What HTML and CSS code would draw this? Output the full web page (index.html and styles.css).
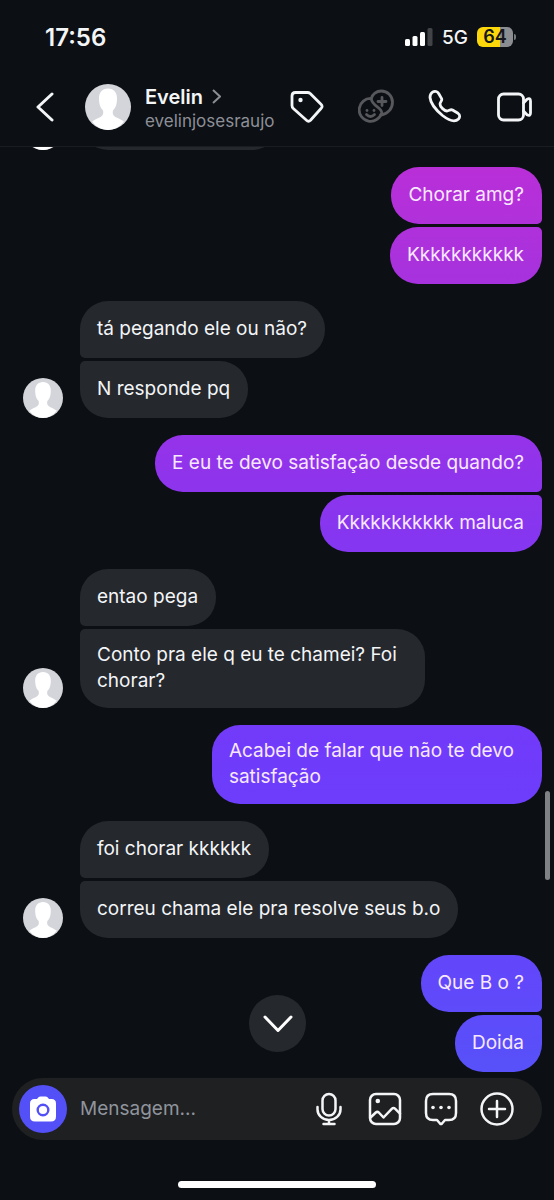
FILE: index.html
```html
<!DOCTYPE html>
<html lang="pt-BR">
<head>
<meta charset="utf-8">
<meta name="viewport" content="width=device-width, initial-scale=1">
<title>Evelin</title>
<link rel="stylesheet" href="styles.css">
</head>
<body>
<svg class="defs" aria-hidden="true">
  <symbol id="person" viewBox="0 0 46 46">
    <circle cx="23" cy="23" r="23" fill="#d3d5da"/>
    <path fill="#fff" d="M23 4.500c-6 0-9.300 4.500-9 10.500.1 4.500.8 8.500 4 11.500.8 3.500-.2 5.500-3.500 7-3 1.300-5.700 2.500-7.300 4.300C11.200 42.800 16.800 46 23 46s11.800-3.200 15.800-8.200c-1.600-1.800-4.300-3-7.300-4.300-3.300-1.500-4.300-3.500-3.500-7 3.200-3 3.900-7 4-11.500.3-6-3-10.500-9-10.500z"/>
  </symbol>
</svg>
<div class="screen">
  <div class="status">
    <time class="clock">17:56</time>
    <div class="status-right">
      <svg class="signal" viewBox="0 0 28 18" aria-hidden="true">
        <rect x="0" y="11" width="5" height="7" rx="1.500"/>
        <rect x="7.500" y="8" width="5" height="10" rx="1.500"/>
        <rect x="15" y="4" width="5" height="14" rx="1.500"/>
        <rect x="22.500" y="0" width="5" height="18" rx="1.500" opacity=".22"/>
      </svg>
      <span class="network">5G</span>
      <span class="battery">64</span>
    </div>
  </div>

  <header class="header">
    <button class="icon-button back" aria-label="Voltar">
      <svg viewBox="0 0 18 30"><path d="M16 2 2 15l14 13"/></svg>
    </button>
    <svg class="avatar avatar-large" role="img" aria-label="Foto de Evelin"><use href="#person"/></svg>
    <a class="contact" href="#">
      <span class="name">Evelin <svg class="chevron" viewBox="0 0 9 15" aria-hidden="true"><path d="m1 1 7 6.500L1 14"/></svg></span>
      <span class="handle">evelinjosesraujo</span>
    </a>
    <div class="actions">
      <button class="icon-button" aria-label="Etiqueta">
        <svg viewBox="0 0 36 36"><path d="M6.500 3.500h12q1.500 0 2.700 1L32 15.300q2.200 2.200 0 4.200L21.500 31.300q-2 2-4 0L4.300 19.500q-1.300-1.200-1.300-3V7q0-3.500 3.500-3.500z"/><circle class="solid" cx="11.500" cy="11" r="2.200"/></svg>
      </button>
      <button class="icon-button dim" aria-label="Figurinhas">
        <svg viewBox="0 0 36 36"><path d="M13.300 9.500C14.300 5 18.500 2 23.300 2c6.200 0 11.200 5 11.200 11.200 0 6.500-4.700 11.800-11.500 12.800"/><path d="M13.300 9.500A11.400 11.400 0 1 0 23.600 23.800C24.500 18.500 13.500 17 13.300 9.500z"/><path d="M24 8.500v8M20 12.500h8M8.500 25.500q4 4 8 0"/><circle class="solid" cx="9" cy="21.500" r="1.400"/><circle class="solid" cx="16" cy="21.500" r="1.400"/></svg>
      </button>
      <button class="icon-button" aria-label="Ligar">
        <svg viewBox="0 0 36 36"><path d="M5.500 3.200C8 1.500 10.500 2.500 11.800 4.800l2.800 4.800C15.600 11.500 13 13 13 15c0 3 4.500 7 7 7 2 0 3.500-2 5.500-1l5.500 3.300c2.500 1.700 1.800 4.200.5 5.700-3.500 3.500-9.500 1.500-16-3.500C9 21 3.500 14 3 8.500 3 6 3.500 4.500 5.500 3.200z"/></svg>
      </button>
      <button class="icon-button" aria-label="Chamada de vídeo">
        <svg viewBox="0 0 36 36"><rect x="2.500" y="5" width="25" height="26" rx="5"/><path d="m27.500 14 3.500-3.700q3.500-1.800 3.500 1.700v12q0 3.500-3.500 1.700L27.500 22"/></svg>
      </button>
    </div>
  </header>

  <main class="chat">
    <section class="group received">
      <svg class="avatar"><use href="#person"/></svg>
      <div class="stack"><div class="bubble cut"></div></div>
    </section>
    <section class="group sent">
      <div class="stack"><p class="bubble">Chorar amg?</p><p class="bubble">Kkkkkkkkkkk</p></div>
    </section>
    <section class="group received">
      <svg class="avatar"><use href="#person"/></svg>
      <div class="stack"><p class="bubble">tá pegando ele ou não?</p><p class="bubble">N responde pq</p></div>
    </section>
    <section class="group sent">
      <div class="stack"><p class="bubble">E eu te devo satisfação desde quando?</p><p class="bubble">Kkkkkkkkkkk maluca</p></div>
    </section>
    <section class="group received">
      <svg class="avatar"><use href="#person"/></svg>
      <div class="stack"><p class="bubble">entao pega</p><p class="bubble multiline">Conto pra ele q eu te chamei? Foi<br>chorar?</p></div>
    </section>
    <section class="group sent">
      <div class="stack"><p class="bubble multiline">Acabei de falar que não te devo<br>satisfação</p></div>
    </section>
    <section class="group received">
      <svg class="avatar"><use href="#person"/></svg>
      <div class="stack"><p class="bubble">foi chorar kkkkkk</p><p class="bubble">correu chama ele pra resolve seus b.o</p></div>
    </section>
    <section class="group sent">
      <div class="stack"><p class="bubble">Que B o ?</p><p class="bubble">Doida</p></div>
    </section>
    <span class="scrollbar"></span>
    <button class="jump" aria-label="Ir para o fim">
      <svg viewBox="0 0 30 18"><path d="m2 2 13 13.500L28 2"/></svg>
    </button>
  </main>

  <footer class="footer">
    <form class="composer">
      <button class="camera" type="button" aria-label="Câmera">
        <svg viewBox="0 0 28 26"><path fill="#fff" d="M8 3 9.500 1.200Q10.300.5 11.500.5h5q1.200 0 2 .7L20 3h2.500Q27 3 27 7.500v13q0 5-5 5H6q-5 0-5-5v-13Q1 3 5.500 3z"/><circle cx="14" cy="14" r="5.300" fill="none" stroke="#5450f8" stroke-width="2.400"/></svg>
      </button>
      <input class="field" type="text" aria-label="Mensagem" placeholder="Mensagem...">
      <button class="icon-button" type="button" aria-label="Gravar áudio">
        <svg viewBox="0 0 34 34"><rect x="10.500" y="2" width="13" height="21.500" rx="6.500"/><path d="M5.500 15v2.500a11.500 10.500 0 0 0 23 0V15M17 28v3.500M11.500 32h11"/></svg>
      </button>
      <button class="icon-button" type="button" aria-label="Enviar foto">
        <svg viewBox="0 0 34 34"><rect x="2" y="2" width="30" height="30" rx="6"/><path d="m2.500 25.500 5.300-5q1.500-1.300 3 0l4.700 5 8.500-8.800q1.500-1.500 3 0l5 5"/><circle class="solid" cx="9.800" cy="9" r="2.300"/></svg>
      </button>
      <button class="icon-button" type="button" aria-label="Respostas rápidas">
        <svg viewBox="0 0 34 34"><path d="M9 2h16q7 0 7 7v12q0 7-7 7h-4l-3 3.500q-1 1-2 0L13 28H9q-7 0-7-7V9q0-7 7-7z"/><circle class="solid" cx="9" cy="15.500" r="1.800"/><circle class="solid" cx="17" cy="15.500" r="1.800"/><circle class="solid" cx="25" cy="15.500" r="1.800"/></svg>
      </button>
      <button class="icon-button" type="button" aria-label="Mais opções">
        <svg viewBox="0 0 34 34"><circle cx="17" cy="17" r="15.500"/><path d="M17 9v16M9 17h16"/></svg>
      </button>
    </form>
    <div class="home-indicator"></div>
  </footer>
</div>
</body>
</html>
```
FILE: styles.css
```css
* { box-sizing: border-box; }

body {
  margin: 0;
  background: #0c0f14;
  color: #f3f5f7;
  font-family: Inter, "Liberation Sans", sans-serif;
}

button {
  padding: 0;
  border: 0;
  background: none;
  color: inherit;
  font: inherit;
}

svg { display: block; }
.defs { position: absolute; width: 0; height: 0; }

.screen {
  display: flex;
  flex-direction: column;
  height: 100vh;
}

/* Status bar */
.status {
  display: flex;
  align-items: center;
  justify-content: space-between;
  height: 74px;
  padding: 0 41px 0 45px;
}
.clock { font-size: 24px; font-weight: 600; }
.status-right { display: flex; align-items: center; gap: 9px; }
.signal { width: 28px; height: 18px; fill: #fff; }
.network { font-size: 19px; font-weight: 500; }
.battery {
  position: relative;
  width: 36px;
  height: 20px;
  border-radius: 6px;
  background: linear-gradient(90deg, #fcd70a 64%, #8c8d91 64%);
  color: #15161a;
  font-size: 18px;
  font-weight: 600;
  line-height: 20px;
  text-align: center;
}
.battery::after {
  content: "";
  position: absolute;
  top: 7px;
  right: -3px;
  width: 2px;
  height: 6px;
  border-radius: 0 2px 2px 0;
  background: #77787c;
}

/* Header */
.header {
  display: flex;
  align-items: center;
  height: 73px;
  padding: 0 22px 7px 36px;
  border-bottom: 1px solid #191c21;
}
.icon-button svg {
  width: 34px;
  height: 34px;
  fill: none;
  stroke: currentColor;
  stroke-width: 2.5;
  stroke-linecap: round;
  stroke-linejoin: round;
}
.icon-button .solid { fill: currentColor; stroke: none; }
.header .icon-button svg { width: 36px; height: 36px; stroke-width: 2.8; }
.header .back svg { width: 18px; height: 30px; stroke-width: 3; }
.dim { color: #56585c; }
.avatar { flex: none; width: 40px; height: 40px; }
.avatar-large { width: 46px; height: 46px; margin-left: 31px; }
.contact {
  display: flex;
  flex-direction: column;
  margin-left: 14px;
  padding-top: 4px;
  color: inherit;
  text-decoration: none;
}
.name {
  display: flex;
  align-items: center;
  gap: 9px;
  font-size: 20px;
  font-weight: 600;
  line-height: 24px;
}
.chevron { width: 9px; height: 15px; fill: none; stroke: #8b8e94; stroke-width: 2; }
.handle { color: #8d9097; font-size: 17px; line-height: 24px; }
.actions { display: flex; gap: 33px; margin-left: auto; }

/* Conversation */
.chat {
  position: relative;
  display: flex;
  flex: 1;
  flex-direction: column;
  justify-content: flex-end;
  gap: 17px;
  min-height: 0;
  padding: 0 12px 6px 23px;
  overflow: hidden;
}
.group { display: flex; flex: none; align-items: flex-end; gap: 17px; }
.stack { display: flex; flex: 1; flex-direction: column; align-items: flex-start; gap: 3px; }
.sent .stack { align-items: flex-end; }
.bubble {
  display: flex;
  align-items: center;
  min-height: 57px;
  margin: 0;
  padding: 13px 18px 14px 17px;
  border-radius: 28px;
  background: #25282d;
  font-size: 19px;
  line-height: 26px;
}
.multiline { display: block; padding-right: 28px; }
.cut { width: 200px; }
.sent .bubble {
  background: linear-gradient(#b92fd8 167px, #a832dd 270px, #9333ea 450px, #8536f0 540px, #6f3bfb 765px, #6148fa 983px, #5850f9 1060px) fixed;
  color: #f8e8ff;
}
.received .bubble:first-child:not(:last-child) { border-bottom-left-radius: 5px; }
.received .bubble:last-child:not(:first-child) { border-top-left-radius: 5px; }
.sent .bubble:first-child:not(:last-child) { border-bottom-right-radius: 5px; }
.sent .bubble:last-child:not(:first-child) { border-top-right-radius: 5px; }

.scrollbar {
  position: absolute;
  right: 4px;
  bottom: 198px;
  width: 5px;
  height: 89px;
  border-radius: 3px;
  background: #7f8185;
}
.jump {
  position: absolute;
  bottom: 26px;
  left: 50%;
  display: grid;
  place-items: center;
  width: 57px;
  height: 57px;
  margin-left: -28px;
  border-radius: 50%;
  background: #25282d;
}
.jump svg {
  width: 30px;
  height: 18px;
  fill: none;
  stroke: #fff;
  stroke-width: 3;
  stroke-linecap: round;
  stroke-linejoin: round;
}

/* Composer */
.footer { padding: 0 12px 12px; }
.composer {
  display: flex;
  align-items: center;
  gap: 22px;
  height: 62px;
  padding: 0 28px 0 7px;
  border-radius: 31px;
  background: #1f2022;
}
.camera {
  display: grid;
  flex: none;
  place-items: center;
  width: 48px;
  height: 48px;
  border-radius: 50%;
  background: #5450f8;
}
.camera svg { width: 28px; height: 26px; }
.field {
  flex: 1;
  min-width: 0;
  margin-left: -9px;
  padding: 0;
  border: 0;
  outline: 0;
  background: none;
  color: inherit;
  font: 19px/26px Inter, "Liberation Sans", sans-serif;
}
.field::placeholder { color: #8f949c; opacity: 1; }
.home-indicator {
  width: 198px;
  height: 7px;
  margin: 41px auto 0;
  border-radius: 4px;
  background: #fff;
}
```
